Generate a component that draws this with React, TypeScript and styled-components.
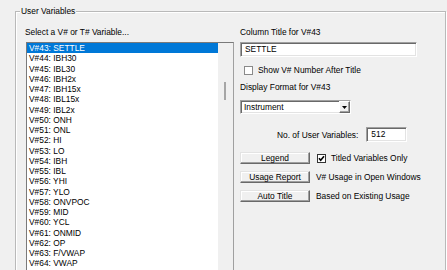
import React from 'react';
import styled, { createGlobalStyle } from 'styled-components';

const GlobalStyle = createGlobalStyle`
  html, body {
    margin: 0;
    padding: 0;
    background: #f0f0f0;
  }
  body {
    font-family: 'Liberation Sans', Arial, sans-serif;
    font-size: 8.4px;
    color: #000;
  }
`;

const variables = [
  'SETTLE', 'IBH30', 'IBL30', 'IBH2x', 'IBH15x', 'IBL15x', 'IBL2x', 'ONH',
  'ONL', 'HI', 'LO', 'IBH', 'IBL', 'YHI', 'YLO', 'ONVPOC', 'MID', 'YCL',
  'ONMID', 'OP', 'F/VWAP', 'VWAP',
];

export default function App(): JSX.Element {
  return (
    <Page>
      <GlobalStyle />
      <Group>
        <GroupTitle>User Variables</GroupTitle>
        <Columns>
          <LeftColumn>
            <Label>Select a V# or T# Variable...</Label>
            <ListBox>
              <Items>
                {variables.map((name, i) => (
                  <Item key={name} $selected={i === 0}>
                    V#{43 + i}: {name}
                  </Item>
                ))}
              </Items>
              <ScrollTrack>
                <ScrollThumb />
              </ScrollTrack>
            </ListBox>
          </LeftColumn>

          <RightColumn>
            <Label>Column Title for V#43</Label>
            <TitleInput>SETTLE</TitleInput>
            <CheckRow>
              <CheckBox />
              <CheckLabel>Show V# Number After Title</CheckLabel>
            </CheckRow>
            <Label $top={7}>Display Format for V#43</Label>
            <Select>
              <SelectValue>Instrument</SelectValue>
              <SelectArrow>
                <svg width="5" height="3" viewBox="0 0 5 3">
                  <polygon points="0,0 5,0 2.5,3" fill="#000" />
                </svg>
              </SelectArrow>
            </Select>
            <CountRow>
              <span>No. of User Variables:</span>
              <CountInput>512</CountInput>
            </CountRow>
            <ButtonRow $top={10}>
              <Button>Legend</Button>
              <CheckBox $checked $gap={7}>
                <svg width="7" height="7" viewBox="0 0 7 7">
                  <polyline
                    points="1,3.2 2.7,5.2 6,1.2"
                    fill="none"
                    stroke="#000"
                    strokeWidth="1.6"
                  />
                </svg>
              </CheckBox>
              <CheckLabel>Titled Variables Only</CheckLabel>
            </ButtonRow>
            <ButtonRow>
              <Button>Usage Report</Button>
              <SideText>V# Usage in Open Windows</SideText>
            </ButtonRow>
            <ButtonRow>
              <Button>Auto Title</Button>
              <SideText>Based on Existing Usage</SideText>
            </ButtonRow>
          </RightColumn>
        </Columns>
      </Group>
    </Page>
  );
}

const Page = styled.div`
  width: 447px;
  height: 270px;
  overflow: hidden;
  padding-top: 11px;
  box-sizing: border-box;
`;

const Group = styled.div`
  position: relative;
  margin-left: 15px;
  width: 420px;
  height: 290px;
  border: 1px solid #b9b9b9;
  box-shadow: inset 1px 1px 0 #fff, 1px 1px 0 #fff;
  padding: 15px 0 0 9px;
  box-sizing: content-box;
`;

const GroupTitle = styled.div`
  position: absolute;
  top: -6px;
  left: 4px;
  padding: 0 1px;
  background: #f0f0f0;
  line-height: 10px;
`;

const Columns = styled.div`
  display: flex;
  gap: 6px;
`;

const LeftColumn = styled.div`
  width: 209px;
  display: flex;
  flex-direction: column;
`;

const RightColumn = styled.div`
  width: 190px;
  display: flex;
  flex-direction: column;
`;

const Label = styled.div<{ $top?: number }>`
  line-height: 10px;
  height: 10px;
  white-space: nowrap;
  margin-top: ${(p) => p.$top ?? 0}px;
`;

const ListBox = styled.div`
  margin: 5px 0 0 1px;
  height: 240px;
  display: flex;
  border: 1px solid #a0a0a0;
  border-top-color: #7a7a7a;
  border-left-color: #7a7a7a;
  background: #fff;
`;

const Items = styled.div`
  flex: 1;
  display: flex;
  flex-direction: column;
`;

const Item = styled.div<{ $selected?: boolean }>`
  height: 10.25px;
  line-height: 10.25px;
  padding-left: 2px;
  white-space: nowrap;
  background: ${(p) => (p.$selected ? '#0078d7' : 'transparent')};
  color: ${(p) => (p.$selected ? '#fff' : '#000')};
`;

const ScrollTrack = styled.div`
  width: 15px;
  background: #f0f0f0;
`;

const ScrollThumb = styled.div`
  margin: 39px 0 0 6px;
  width: 2px;
  height: 18px;
  background: #a6a6a6;
`;

const sunken = `
  box-sizing: border-box;
  background: #fff;
  border: 1px solid;
  border-color: #a0a0a0 #fff #fff #a0a0a0;
  box-shadow: inset 1px 1px 0 #696969, inset -1px -1px 0 #e3e3e3;
`;

const TitleInput = styled.div`
  ${sunken}
  margin-top: 5px;
  width: 177px;
  height: 15px;
  line-height: 13px;
  padding-left: 4px;
`;

const CheckRow = styled.div`
  margin-top: 8px;
  height: 10px;
  padding-left: 4px;
  display: flex;
  align-items: center;
`;

const CheckBox = styled.div<{ $checked?: boolean; $gap?: number }>`
  box-sizing: border-box;
  width: 9px;
  height: 9px;
  margin-left: ${(p) => p.$gap ?? 0}px;
  background: #fff;
  border: 1px solid ${(p) => (p.$checked ? '#333' : '#8a8a8a')};
  display: flex;
  align-items: center;
  justify-content: center;
  flex-shrink: 0;
`;

const CheckLabel = styled.span`
  margin-left: 5px;
  white-space: nowrap;
`;

const Select = styled.div`
  ${sunken}
  margin-top: 8px;
  width: 111px;
  height: 14px;
  display: flex;
  align-items: stretch;
`;

const SelectValue = styled.div`
  flex: 1;
  line-height: 12px;
  padding-left: 3px;
`;

const SelectArrow = styled.div`
  box-sizing: border-box;
  width: 11px;
  background: #f0f0f0;
  border: 1px solid;
  border-color: #fff #696969 #696969 #fff;
  box-shadow: inset -1px -1px 0 #a0a0a0;
  display: flex;
  align-items: center;
  justify-content: center;
`;

const CountRow = styled.div`
  margin-top: 13px;
  padding-left: 37px;
  display: flex;
  align-items: center;
  white-space: nowrap;
`;

const CountInput = styled.div`
  ${sunken}
  margin-left: 8px;
  width: 41px;
  height: 15px;
  line-height: 13px;
  padding-left: 4px;
`;

const ButtonRow = styled.div<{ $top?: number }>`
  margin-top: ${(p) => p.$top ?? 7}px;
  display: flex;
  align-items: center;
`;

const Button = styled.div`
  box-sizing: border-box;
  width: 70px;
  height: 12px;
  flex-shrink: 0;
  line-height: 10px;
  text-align: center;
  background: #f0f0f0;
  border: 1px solid;
  border-color: #e3e3e3 #696969 #696969 #e3e3e3;
  box-shadow: inset -1px -1px 0 #a0a0a0, inset 1px 1px 0 #fff;
  white-space: nowrap;
`;

const SideText = styled.span`
  margin-left: 6px;
  white-space: nowrap;
`;
